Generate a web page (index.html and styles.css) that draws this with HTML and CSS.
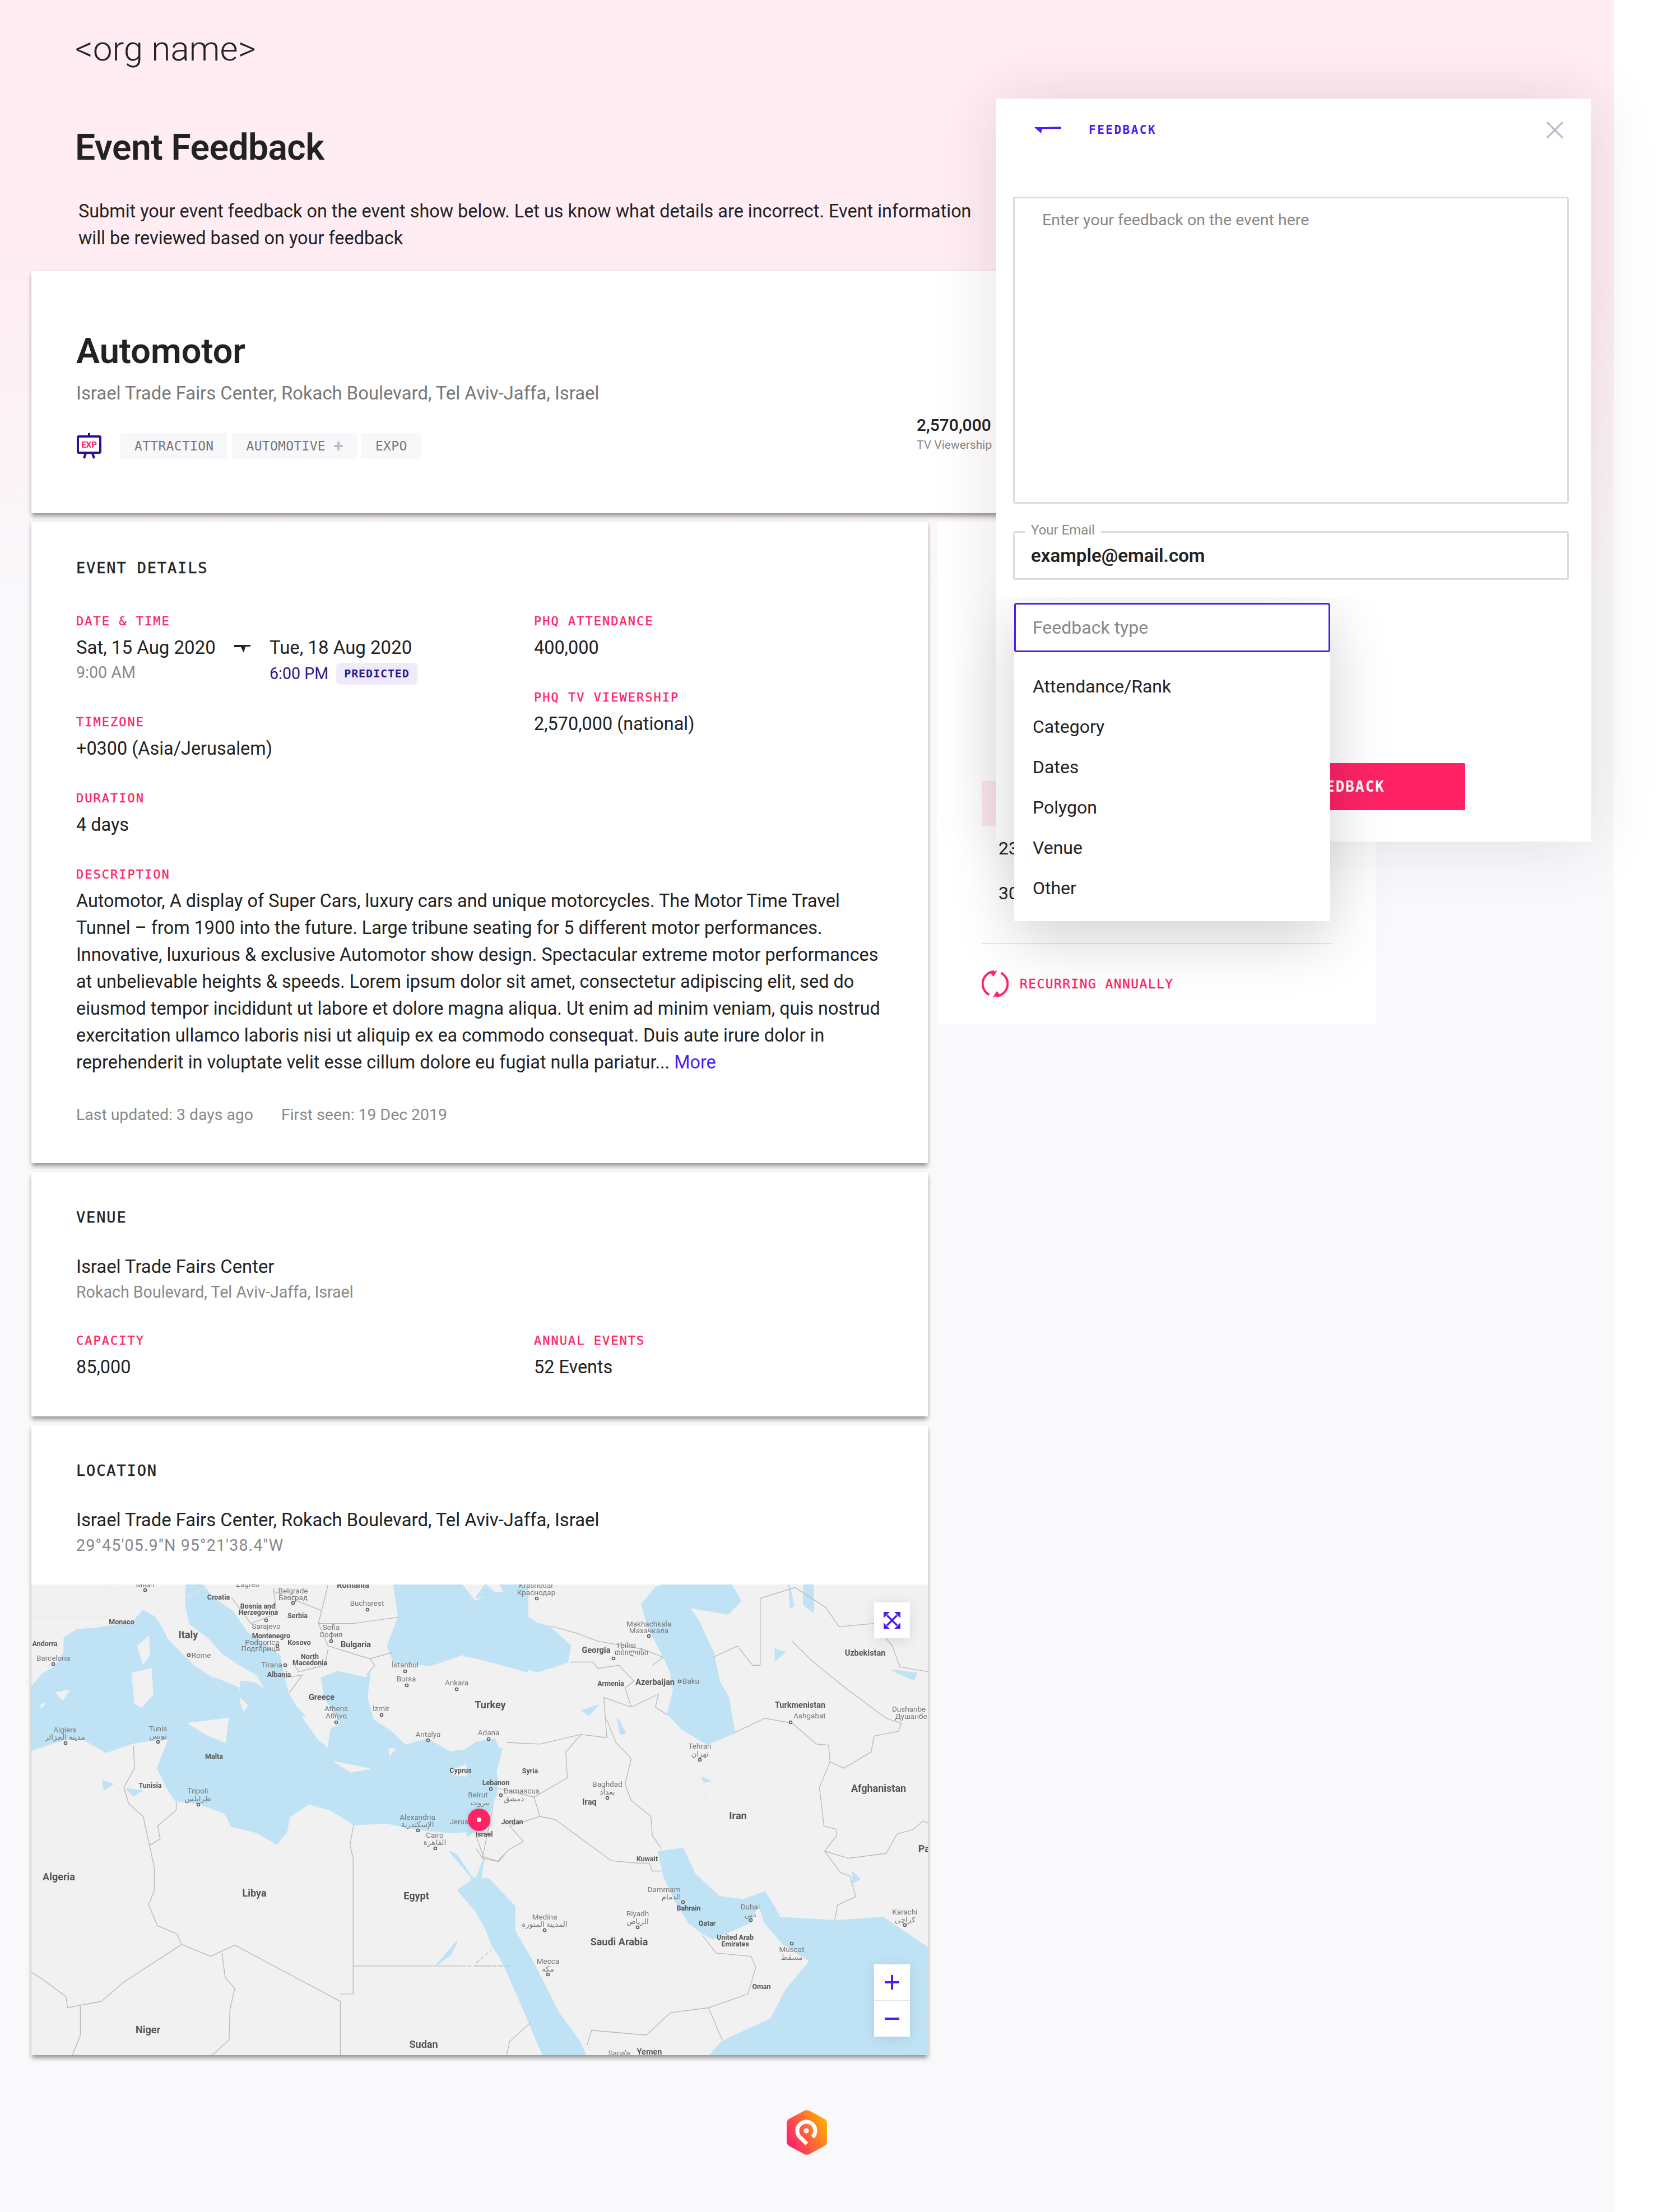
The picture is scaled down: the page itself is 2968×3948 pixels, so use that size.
FILE: index.html
```html
<!DOCTYPE html>
<html>
<head>
    <meta charset="utf-8">
    <title>Event Feedback</title>
    <link rel="stylesheet" href="styles.css">
</head>
<body>
<div class="page">
    <div class="org">&lt;org name&gt;</div>
    <h1 class="page-title">Event Feedback</h1>
    <p class="intro">Submit your event feedback on the event show below. Let us know what details are incorrect. Event information<br>will be reviewed based on your feedback</p>

    <div class="card card-top">
        <h2 class="event-name">Automotor</h2>
        <div class="event-place">Israel Trade Fairs Center, Rokach Boulevard, Tel Aviv-Jaffa, Israel</div>
        <div class="event-meta">
            <div class="tags">
                <svg class="exp-icon" width="45" height="46" viewBox="0 0 45 46">
                    <rect x="20" y="0" width="4" height="6" fill="#2e0f8f"/>
                    <rect x="2" y="6" width="40" height="29" rx="2" fill="#fff" stroke="#2e0f8f" stroke-width="4"/>
                    <path d="M16 36 L13 45 M28 36 L31 45" stroke="#2e0f8f" stroke-width="4"/>
                    <text x="22" y="26" class="exp-text" text-anchor="middle">EXP</text>
                </svg>
                <span class="tag">ATTRACTION</span>
                <span class="tag">AUTOMOTIVE <svg class="tag-plus" width="16" height="16" viewBox="0 0 16 16"><path d="M8 0V16M0 8H16" stroke="#bdbbcb" stroke-width="4"/></svg></span>
                <span class="tag">EXPO</span>
            </div>
            <div class="stat">
                <div class="stat-num">2,570,000</div>
                <div class="stat-label">TV Viewership</div>
            </div>
        </div>
    </div>

    <div class="columns">
        <div class="main-col">
            <div class="card card-details">
                <h3 class="section-title">EVENT DETAILS</h3>
                <div class="two-col">
                    <div>
                        <div class="field">
                            <div class="label">DATE &amp; TIME</div>
                            <div class="dates">
                                <div class="date-a">
                                    <div class="value">Sat, 15 Aug 2020</div>
                                    <div class="muted">9:00 AM</div>
                                </div>
                                <svg class="date-arrow" width="29" height="14" viewBox="0 0 29 14"><path d="M0 0H29V3L20 3 17 14 12 4 0 4Z" fill="#222"/></svg>
                                <div class="date-b">
                                    <div class="value">Tue, 18 Aug 2020</div>
                                    <div class="muted predicted-row"><span class="time-blue">6:00 PM</span><span class="badge">PREDICTED</span></div>
                                </div>
                            </div>
                        </div>
                        <div class="field">
                            <div class="label">TIMEZONE</div>
                            <div class="value">+0300 (Asia/Jerusalem)</div>
                        </div>
                    </div>
                    <div>
                        <div class="field">
                            <div class="label">PHQ ATTENDANCE</div>
                            <div class="value">400,000</div>
                        </div>
                        <div class="field">
                            <div class="label">PHQ TV VIEWERSHIP</div>
                            <div class="value">2,570,000 (national)</div>
                        </div>
                    </div>
                </div>
                <div class="field">
                    <div class="label">DURATION</div>
                    <div class="value">4 days</div>
                </div>
                <div class="field">
                    <div class="label">DESCRIPTION</div>
                    <p class="value description">Automotor, A display of Super Cars, luxury cars and unique motorcycles. The Motor Time Travel<br>Tunnel – from 1900 into the future. Large tribune seating for 5 different motor performances.<br>Innovative, luxurious &amp; exclusive Automotor show design. Spectacular extreme motor performances<br>at unbelievable heights &amp; speeds. Lorem ipsum dolor sit amet, consectetur adipiscing elit, sed do<br>eiusmod tempor incididunt ut labore et dolore magna aliqua. Ut enim ad minim veniam, quis nostrud<br>exercitation ullamco laboris nisi ut aliquip ex ea commodo consequat. Duis aute irure dolor in<br>reprehenderit in voluptate velit esse cillum dolore eu fugiat nulla pariatur... <a class="more">More</a></p>
                </div>
                <div class="updated"><span>Last updated: 3 days ago</span><span>First seen: 19 Dec 2019</span></div>
            </div>

            <div class="card card-venue">
                <h3 class="section-title">VENUE</h3>
                <div class="value place-name">Israel Trade Fairs Center</div>
                <div class="muted">Rokach Boulevard, Tel Aviv-Jaffa, Israel</div>
                <div class="two-col venue-stats">
                    <div>
                        <div class="label">CAPACITY</div>
                        <div class="value">85,000</div>
                    </div>
                    <div>
                        <div class="label">ANNUAL EVENTS</div>
                        <div class="value">52 Events</div>
                    </div>
                </div>
            </div>

            <div class="card card-location">
                <h3 class="section-title">LOCATION</h3>
                <div class="value place-name">Israel Trade Fairs Center, Rokach Boulevard, Tel Aviv-Jaffa, Israel</div>
                <div class="muted coords">29°45'05.9"N 95°21'38.4"W</div>
                <div class="map">
                    <svg class="map-svg" width="1600" height="840" viewBox="56 2828 1600 840">
                        <rect x="56" y="2828" width="1600" height="840" fill="#f1f1f1"/>
                        <!-- left half, coordinates read off the crop -->
                        <g transform="translate(0,2800) scale(.574)">
                            <path class="sea" d="M90,378 L130,330 170,305 200,260 200,215 240,190 300,185 345,178 410,170 445,130 480,150 500,180 520,220 560,260 600,300 650,335 680,345 740,370 745,420 755,445 725,480 750,460 775,425 745,395 750,350 790,355 830,380 800,330 740,295 690,260 650,215 590,170 578,110 580,49 630,49 660,90 720,130 770,200 830,240 870,270 880,330 895,385 920,430 960,470 1000,540 1020,560 1030,500 1060,480 1010,400 1000,340 1050,320 1140,340 1150,325 1140,400 1160,470 1220,510 1260,550 1330,530 1400,570 1480,560 1560,560 1540,640 1545,700 1500,780 1470,815 1400,820 1300,810 1200,790 1100,795 1030,750 960,730 900,770 890,820 860,855 800,820 720,800 700,760 620,730 545,720 520,680 490,620 510,570 525,530 490,530 420,540 330,570 260,530 200,530 90,565Z"/>
                            <path class="land" d="M428,240 L462,210 465,270 445,295Z M410,325 L470,310 475,390 440,430 420,420Z M585,480 L710,465 700,540 640,515Z M175,385 L215,378 195,408Z M125,425 L140,418 130,432Z M940,460 L1000,465 1020,555 990,530Z M1040,600 L1150,622 1090,632Z M1210,560 L1228,560 1212,580Z M1405,625 L1490,595 1450,645 1410,640Z"/>
                            <path class="sea" d="M1225,49 L1240,150 1205,240 1225,290 1340,300 1440,265 1640,320 1640,49Z M1400,880 L1425,910 1480,975 1460,950 1420,890Z M1505,900 L1480,970 1495,960Z M1465,965 L1520,965 1600,1050 1600,1270 1530,1170 1500,1090Z"/>
                            <path class="land" d="M1440,49 L1550,49 1568,80 1500,130 1480,100Z"/>
                            <path class="sea" d="M320,660 L350,670 325,685Z M395,685 L440,690 415,705Z M1360,1230 L1420,1160 1400,1200Z"/>
                            <path class="border" d="M415,550 L418,620 385,680 400,730 445,770 465,860 480,930 480,1000 462,1045 490,1110 550,1135 565,1168 385,1285 315,1345 210,1365 205,1330 130,1275 98,1255 M548,725 L548,750 490,800 498,840 465,860 M565,1168 L655,1205 730,1170 1058,1345 1058,1512 M250,1360 L250,1450 225,1512 M690,1195 L700,1270 730,1305 715,1370 712,1465 660,1512 M1058,1322 L1098,1322 1098,900 1088,860 1100,795 M1098,1235 L1435,1235 M1480,830 L1503,895 1550,910 1568,890 M720,90 L780,170 860,140 850,60 M850,70 L1000,130 990,170 1100,170 1240,150 M1000,130 L1020,50 M990,170 L1020,240 1150,280 1220,260 M915,300 L930,320 1010,300 1020,250 M880,340 L940,330 900,385 M1150,280 L1165,300 1140,330"/>
                            <path class="border border-dash" d="M1435,1235 L1568,1235"/>
                            <path class="road" d="M200,130 L360,60 M100,150 L340,150 M520,110 L640,60 M700,380 L640,320 M1300,400 L1500,470"/>
                        </g>
                        <!-- right half, coordinates read off the crop -->
                        <g transform="translate(850,2800) scale(.542,.574)">
                            <path class="sea" d="M-40,110 L0,100 60,75 140,75 100,105 200,170 240,180 310,240 300,290 200,320 100,290 -40,270Z M30,49 L60,75 0,90Z"/>
                            <path class="sea" d="M545,110 L590,60 620,49 840,49 870,100 830,140 700,120 730,160 780,260 800,350 830,400 850,510 760,545 680,500 630,450 650,380 640,320 610,260 570,190Z"/>
                            <path class="land" d="M800,260 L860,260 880,320 830,335Z"/>
                            <path class="sea" d="M0,540 L60,530 75,560 60,610 70,660 55,730 25,800 -30,830 -30,560Z"/>
                            <path class="sea" d="M-30,980 L0,960 60,1020 110,1100 190,1230 270,1380 340,1470 360,1512 220,1512 170,1400 110,1270 50,1150 0,1065 -60,1000Z M600,880 L680,870 720,950 800,1020 880,1030 950,1005 980,1050 1000,1085 1180,1095 1340,1085 1488,1180 1488,1512 770,1512 810,1470 970,1400 1020,1310 1100,1220 1010,1165 950,1100 930,1040 900,1100 780,1150 740,1130 700,1100 660,1040 620,960Z"/>
                            <path class="sea" d="M1030,49 L1045,115 1035,120Z M1080,49 L1108,49 1110,135 1078,110Z M1240,945 L1262,965 1240,975Z M350,440 L400,425 370,455Z M465,465 L490,510 475,515Z M745,650 L770,660 750,662Z M985,250 L1015,260 985,285Z M1370,315 L1450,325 1440,345Z"/>
                            <path class="border" d="M20,900 L70,910 105,875 155,848 110,800 210,770 190,710 300,650 295,570 345,515 430,525 420,400 510,430 600,390 590,430 630,455 M210,770 L260,780 445,908 530,915 570,915 580,940 610,940 M430,470 L460,540 510,590 490,670 510,720 575,770 580,830 610,870 M850,510 L950,465 1040,480 1120,545 1160,548 1165,600 1130,680 1145,800 1187,810 1187,830 1147,878 1200,945 1230,955 1250,1020 1190,1045 1180,1095 M1147,878 L1225,900 1350,885 1385,825 1440,810 1470,785 1488,790 M935,300 L935,92 1050,58 1150,120 1195,180 1310,170 M935,300 L910,300 860,240 780,275 M1040,225 L1110,290 1215,370 1350,465 1400,480 1390,505 1310,520 1300,570 1210,620 1165,600 M905,1205 L920,1240 895,1322 765,1365 640,1380 560,1450 380,1435 365,1480 M765,1365 L810,1465 M745,1140 L790,1195 905,1205 M245,178 L330,200 400,225 490,240 550,250 615,275 580,300 M310,290 L385,290 400,310 470,300 520,350 490,370 510,430 M100,540 L210,545 345,515 M60,680 L190,710 M55,740 L20,900 0,870 M1370,240 L1395,305 1488,320 M1310,170 L1370,240 M180,1410 L110,1470 100,1512"/>
                            <path class="border border-dash" d="M0,1235 L110,1235 M0,1225 L50,1185"/>
                            <path class="road" d="M620,630 L735,595 M730,620 L760,720 M520,480 L620,520"/>
                        </g>
                        <g class="dots">
                            <circle cx="259" cy="2838" r="2.5"/><circle cx="523" cy="2861" r="2.5"/><circle cx="656" cy="2873" r="2.5"/><circle cx="475" cy="2892" r="2.5"/><circle cx="591" cy="2929" r="2.5"/><circle cx="337" cy="2954" r="2.5"/><circle cx="495" cy="2938" r="2.5"/><circle cx="509" cy="2972" r="2.5"/><circle cx="723" cy="2983" r="2.5"/><circle cx="726" cy="3008" r="2.5"/><circle cx="815" cy="3015" r="2.5"/><circle cx="600" cy="3074" r="2.5"/><circle cx="681" cy="3061" r="2.5"/><circle cx="117" cy="3111" r="2.5"/><circle cx="282" cy="3109" r="2.5"/><circle cx="354" cy="3221" r="2.5"/><circle cx="746" cy="3267" r="2.5"/><circle cx="777" cy="3299" r="2.5"/><circle cx="764" cy="3106" r="2.5"/><circle cx="872" cy="3104" r="2.5"/><circle cx="95" cy="2970" r="2.5"/><circle cx="876" cy="3193" r="2.5"/><circle cx="958" cy="2853" r="2.5"/><circle cx="1158" cy="2920" r="2.5"/><circle cx="1095" cy="2960" r="2.5"/><circle cx="1213" cy="3001" r="2.5"/><circle cx="1411" cy="3074" r="2.5"/><circle cx="1249" cy="3141" r="2.5"/><circle cx="894" cy="3204" r="2.5"/><circle cx="1084" cy="3209" r="2.5"/><circle cx="1219" cy="3395" r="2.5"/><circle cx="1340" cy="3427" r="2.5"/><circle cx="1138" cy="3440" r="2.5"/><circle cx="972" cy="3445" r="2.5"/><circle cx="1413" cy="3469" r="2.5"/><circle cx="978" cy="3524" r="2.5"/><circle cx="1615" cy="3436" r="2.5"/>
                        </g>
                        <g class="city">
                            <text x="259" y="2833">Milan</text><text x="442" y="2832">Zagreb</text>
                            <text x="523" y="2844">Belgrade</text><text x="523" y="2856">Београд</text>
                            <text x="655" y="2866">Bucharest</text><text x="475" y="2907">Sarajevo</text>
                            <text x="591" y="2909">Sofia</text><text x="591" y="2922">София</text>
                            <text x="468" y="2936">Podgorica</text><text x="465" y="2947">Подгорица</text>
                            <text x="95" y="2964">Barcelona</text><text x="359" y="2959">Rome</text><text x="485" y="2976">Tirana</text>
                            <text x="723" y="2976">İstanbul</text><text x="725" y="3001">Bursa</text><text x="815" y="3008">Ankara</text>
                            <text x="600" y="3054">Athens</text><text x="600" y="3067">Αθήνα</text><text x="680" y="3054">İzmir</text>
                            <text x="116" y="3092">Algiers</text><text x="116" y="3105">مدينة الجزائر</text>
                            <text x="282" y="3090">Tunis</text><text x="282" y="3103">تونس</text>
                            <text x="764" y="3100">Antalya</text><text x="872" y="3097">Adana</text>
                            <text x="353" y="3201">Tripoli</text><text x="353" y="3215">طرابلس</text>
                            <text x="853" y="3208">Beirut</text><text x="857" y="3222">بيروت</text>
                            <text x="745" y="3248">Alexandria</text><text x="745" y="3261">الإسكندرية</text>
                            <text x="834" y="3256">Jerusalem</text>
                            <text x="776" y="3280">Cairo</text><text x="776" y="3293">القاهرة</text>
                            <text x="957" y="2834">Krasnodar</text><text x="957" y="2847">Краснодар</text>
                            <text x="1158" y="2903">Makhachkala</text><text x="1158" y="2915">Махачкала</text>
                            <text x="1117" y="2941">Tbilisi</text><text x="1127" y="2954">თბილისი</text>
                            <text x="1233" y="3005">Baku</text><text x="1445" y="3067">Ashgabat</text>
                            <text x="1622" y="3055">Dushanbe</text><text x="1626" y="3068">Душанбе</text>
                            <text x="1249" y="3121">Tehran</text><text x="1249" y="3135">تهران</text>
                            <text x="1084" y="3189">Baghdad</text><text x="1084" y="3203">بغداد</text>
                            <text x="931" y="3201">Damascus</text><text x="917" y="3215">دمشق</text>
                            <text x="1185" y="3377">Dammam</text><text x="1198" y="3390">الدمام</text>
                            <text x="1339" y="3408">Dubai</text><text x="1339" y="3422">دبي</text>
                            <text x="1615" y="3417">Karachi</text><text x="1615" y="3431">كراچی</text>
                            <text x="1138" y="3420">Riyadh</text><text x="1138" y="3434">الرياض</text>
                            <text x="972" y="3426">Medina</text><text x="972" y="3439">المدينة المنورة</text>
                            <text x="1413" y="3484">Muscat</text><text x="1413" y="3498">مسقط</text>
                            <text x="978" y="3505">Mecca</text><text x="978" y="3519">مكة</text>
                            <text x="1105" y="3669">Sana'a</text>
                        </g>
                        <g class="small-country">
                            <text x="390" y="2855">Croatia</text><text x="460" y="2871">Bosnia and</text><text x="461" y="2882">Herzegovina</text>
                            <text x="531" y="2888">Serbia</text><text x="217" y="2899">Monaco</text><text x="484" y="2924">Montenegro</text>
                            <text x="80" y="2938">Andorra</text><text x="534" y="2936">Kosovo</text><text x="553" y="2961">North</text><text x="553" y="2972">Macedonia</text>
                            <text x="498" y="2993">Albania</text><text x="382" y="3139">Malta</text><text x="822" y="3164">Cyprus</text>
                            <text x="268" y="3191">Tunisia</text><text x="885" y="3186">Lebanon</text><text x="864" y="3278">Israel</text>
                            <text x="1090" y="3009">Armenia</text><text x="946" y="3165">Syria</text><text x="914" y="3256">Jordan</text>
                            <text x="1155" y="3322">Kuwait</text><text x="1229" y="3410">Bahrain</text><text x="1262" y="3437">Qatar</text>
                            <text x="1312" y="3462">United Arab</text><text x="1312" y="3474">Emirates</text><text x="1359" y="3550">Oman</text>
                        </g>
                        <g class="mid-country">
                            <text x="630" y="2834">Romania</text><text x="635" y="2940">Bulgaria</text><text x="574" y="3034">Greece</text>
                            <text x="1064" y="2950">Georgia</text><text x="1169" y="3007">Azerbaijan</text><text x="1544" y="2955">Uzbekistan</text>
                            <text x="1428" y="3048">Turkmenistan</text><text x="1052" y="3221">Iraq</text><text x="1159" y="3667">Yemen</text>
                        </g>
                        <g class="country">
                            <text x="336" y="2924">Italy</text><text x="875" y="3049">Turkey</text><text x="105" y="3356">Algeria</text>
                            <text x="454" y="3385">Libya</text><text x="743" y="3390">Egypt</text><text x="264" y="3629">Niger</text>
                            <text x="756" y="3655">Sudan</text><text x="1568" y="3198">Afghanistan</text><text x="1317" y="3247">Iran</text>
                            <text x="1105" y="3472">Saudi Arabia</text><text x="1674" y="3306">Pakistan</text>
                        </g>
                        <circle class="pin" cx="855" cy="3248" r="20"/>
                        <circle cx="855" cy="3248" r="4" fill="#fff"/>
                    </svg>
                    <div class="map-btn map-expand">
                        <svg width="30" height="30" viewBox="0 0 30 30">
                            <path d="M6 6L24 24M24 6L6 24" stroke="#4f1cf0" stroke-width="3.5"/>
                            <path d="M0 0H11L0 11ZM30 0V11L19 0ZM0 30V19L11 30ZM30 30H19L30 19Z" fill="#4f1cf0"/>
                        </svg>
                    </div>
                    <div class="map-zoom">
                        <div class="map-btn-half">
                            <svg width="30" height="30" viewBox="0 0 30 30"><path d="M15 2V28M2 15H28" stroke="#4f1cf0" stroke-width="4"/></svg>
                        </div>
                        <div class="map-btn-half">
                            <svg width="30" height="30" viewBox="0 0 30 30"><path d="M2 15H28" stroke="#4f1cf0" stroke-width="4"/></svg>
                        </div>
                    </div>
                </div>
            </div>
        </div>

        <div class="side-card">
            <div class="side-pink"></div>
            <div class="side-date">23</div>
            <div class="side-date side-date-2">30</div>
            <div class="side-line"></div>
            <div class="recurring">
                <svg width="48" height="48" viewBox="0 0 48 48">
                    <path d="M13.5 43.5A22 22 0 0 1 22 2" fill="none" stroke="#ff2366" stroke-width="4"/>
                    <path d="M34.5 4.5A22 22 0 0 1 26 46" fill="none" stroke="#ff2366" stroke-width="4"/>
                    <path d="M28 0L21 11 15 4ZM20 48L27 37 33 44Z" fill="#ff2366"/>
                </svg>
                <span>RECURRING ANNUALLY</span>
            </div>
        </div>
    </div>

    <svg class="logo" width="72" height="80" viewBox="0 0 72 80">
        <defs>
            <linearGradient id="logo-grad" x1="0" y1="0.8" x2="1" y2="0.25">
                <stop offset="0.05" stop-color="#ff1f6e"/>
                <stop offset="1" stop-color="#ffb000"/>
            </linearGradient>
        </defs>
        <path d="M31 1.5Q36 -1 41 1.5L67 15.5Q72 18 72 24V56Q72 62 67 64.5L41 78.5Q36 81 31 78.5L5 64.5Q0 62 0 56V24Q0 18 5 15.5Z" fill="url(#logo-grad)"/>
        <path d="M36 60.5L23.7 48.3A16 16 0 1 1 46.3 48.3" fill="none" stroke="#fff" stroke-width="7"/>
        <circle cx="35" cy="37" r="4.5" fill="#fff"/>
    </svg>

    <!-- feedback panel lies over the event page -->
    <div class="modal">
        <div class="modal-top">
            <div class="modal-head">
                <svg width="48" height="12" viewBox="0 0 48 12"><path d="M48 0V4H14L12 12 0 1H14Z" fill="#4f1cf0"/></svg>
                <span class="modal-title">FEEDBACK</span>
                <svg class="modal-close" width="32" height="32" viewBox="0 0 32 32"><path d="M1 1L31 31M31 1L1 31" stroke="#bcb9cc" stroke-width="3.5"/></svg>
            </div>
            <div class="textarea">Enter your feedback on the event here</div>
            <div class="email-box">
                <span class="email-label">Your Email</span>
                <span class="email-value">example@email.com</span>
            </div>
        </div>
        <div class="modal-bottom">
            <div class="submit">SUBMIT FEEDBACK</div>
        </div>
        <div class="select">
            <div class="select-input">Feedback type</div>
            <ul class="select-list">
                <li>Attendance/Rank</li>
                <li>Category</li>
                <li>Dates</li>
                <li>Polygon</li>
                <li>Venue</li>
                <li>Other</li>
            </ul>
        </div>
    </div>
</div>
</body>
</html>
```

FILE: styles.css
```css
body {
    margin: 0;
    background-color: #fff;
    font-family: "Roboto", sans-serif;
    color: #222;
}

h1, h2, h3, p, ul {
    margin: 0;
    padding: 0;
}

.page {
    position: relative;
    width: 2880px;
    height: 3948px;
    background: linear-gradient(#ffedf3 0px, #ffedf3 480px, #f9f9fb 1100px);
}

.org {
    padding: 47px 0 0 134px;
    font-size: 62px;
    line-height: 80px;
    font-weight: 300;
}

.page-title {
    margin: 97px 0 0 134px;
    font-size: 64px;
    line-height: 80px;
    font-weight: 600;
    letter-spacing: -0.5px;
}

.intro {
    margin: 49px 0 0 140px;
    font-size: 32.4px;
    line-height: 48px;
    white-space: nowrap;
}

.card {
    background: #fff;
    padding: 63px 80px 64px 80px;
    box-shadow: 0 6px 8px -1px rgba(0,0,0,0.4), 0 0 6px rgba(0,0,0,0.06);
}

.card-details {
    padding-top: 65px;
    padding-bottom: 66px;
}

.card-top {
    margin: 35px 0 0 56px;
    width: 2400px;
    height: 432px;
    box-sizing: border-box;
    padding: 103px 0 0 80px;
}

.event-name {
    font-size: 63px;
    line-height: 80px;
    font-weight: 600;
}

.event-place {
    margin-top: 11px;
    font-size: 32.8px;
    line-height: 48px;
    color: #777;
}

.event-meta {
    margin-top: 15px;
    height: 78px;
    display: grid;
    grid-template-columns: 1500px auto;
}

.tags {
    display: flex;
    align-items: center;
    gap: 8px;
    align-self: end;
}

.exp-icon {
    margin: 0 25px 0 1px;
}

.exp-text {
    font-family: "Roboto", sans-serif;
    font-weight: 700;
    font-size: 15px;
    fill: #ff2366;
}

.tag {
    display: flex;
    align-items: center;
    gap: 15px;
    height: 46px;
    padding: 0 25px;
    background: #f8f8fb;
    border-radius: 3px;
    font-family: "DejaVu Sans Mono", monospace;
    font-size: 23px;
    letter-spacing: 0.3px;
    color: #777;
}

.stat-num {
    font-size: 30px;
    line-height: 36px;
    font-weight: 500;
}

.stat-label {
    font-size: 21px;
    line-height: 34px;
    color: #888;
}

.columns {
    display: grid;
    grid-template-columns: 1600px 784px;
    gap: 16px;
    margin: 15px 0 0 56px;
    align-items: start;
}

.main-col {
    display: flex;
    flex-direction: column;
    gap: 16px;
}

.section-title {
    font-family: "DejaVu Sans Mono", monospace;
    font-size: 27px;
    line-height: 36px;
    font-weight: 400;
    letter-spacing: 1.85px;
    -webkit-text-stroke: 0.5px #222;
    margin-bottom: 64px;
}

.card-details .section-title {
    margin-bottom: 62px;
}

.two-col {
    display: grid;
    grid-template-columns: 817px 1fr;
}

.field {
    margin-bottom: 50px;
}

.label {
    font-family: "DejaVu Sans Mono", monospace;
    font-size: 22px;
    line-height: 30px;
    letter-spacing: 2px;
    -webkit-text-stroke: 0.4px #ff2366;
    color: #ff2366;
    margin-bottom: 8px;
}

.value {
    font-size: 32.4px;
    line-height: 48px;
    white-space: nowrap;
}

.muted {
    font-size: 28.6px;
    line-height: 40px;
    color: #888;
}

.coords {
    letter-spacing: 1.1px;
}

.dates {
    display: flex;
    align-items: flex-start;
}

.date-a {
    width: 282px;
}

.date-b {
    margin-left: 34px;
}

.dates .value {
    font-size: 33px;
}

.date-arrow {
    margin-top: 19px;
}

.predicted-row {
    display: flex;
    align-items: center;
    height: 44px;
}

.time-blue {
    color: #2c1a8c;
}

.badge {
    margin-left: 14px;
    padding: 0 14px;
    height: 39px;
    display: flex;
    align-items: center;
    background: #efebfd;
    border-radius: 8px;
    font-family: "DejaVu Sans Mono", monospace;
    font-weight: 700;
    font-size: 20px;
    letter-spacing: 0.9px;
    color: #2c1a8c;
}

.description {
    margin: 0;
}

.more {
    color: #4f1cf0;
}

.updated {
    display: flex;
    gap: 50px;
    font-size: 28.4px;
    line-height: 40px;
    color: #888;
}

.place-name {
    margin-bottom: 1px;
    font-size: 32.8px;
}

.section-title + .place-name {
    margin-top: -18px;
}

.venue-stats {
    margin-top: 52px;
}

.card-location {
    padding-bottom: 0;
}

.map {
    position: relative;
    margin: 50px -80px 0 -80px;
    height: 840px;
}

.map-svg {
    display: block;
    filter: blur(0.5px);
}

.sea {
    fill: #bfe3f5;
    stroke: #bfe3f5;
    stroke-width: 5;
    stroke-linejoin: round;
}

.land {
    fill: #f1f1f1;
    stroke: #f1f1f1;
    stroke-width: 3;
    stroke-linejoin: round;
}

.border {
    fill: none;
    stroke: #b9b9b9;
    stroke-width: 2.4;
}

.border-dash {
    stroke-dasharray: 12 7;
}

.road {
    fill: none;
    stroke: #e9e9e9;
    stroke-width: 2;
}

.dots circle {
    fill: #f1f1f1;
    stroke: #555;
    stroke-width: 1.6;
}

.map-svg text {
    font-family: "Roboto", "DejaVu Sans", sans-serif;
    text-anchor: middle;
}

.city text {
    font-size: 13.5px;
    fill: #777;
}

.small-country text {
    font-size: 12.5px;
    font-weight: 700;
    fill: #555;
}

.mid-country text {
    font-size: 14.5px;
    font-weight: 700;
    fill: #555;
}

.country text {
    font-size: 18px;
    font-weight: 700;
    fill: #555;
}

.pin {
    fill: #ff2366;
    filter: drop-shadow(0 1px 4px rgba(0,0,0,0.2));
}

.map-btn,
.map-zoom {
    position: absolute;
    left: 1504px;
    width: 64px;
    background: #fff;
    box-shadow: 0 4px 24px rgba(0,0,0,0.1);
}

.map-btn {
    top: 32px;
    height: 64px;
    display: flex;
    align-items: center;
    justify-content: center;
}

.map-zoom {
    top: 678px;
    height: 129px;
}

.map-btn-half {
    height: 64px;
    display: flex;
    align-items: center;
    justify-content: center;
}

.map-btn-half + .map-btn-half {
    border-top: 1px solid #e8e8e8;
}

.side-card {
    background: #fff;
    padding: 463px 78px 48px 80px;
}

.side-pink {
    height: 80px;
    background: #ffeaf0;
}

.side-date {
    margin-top: 16px;
    padding-left: 30px;
    font-size: 32px;
    line-height: 48px;
}

.side-date-2 {
    margin-top: 32px;
}

.side-line {
    margin-top: 65px;
    height: 2px;
    background: #e8e8e8;
}

.recurring {
    margin-top: 47px;
    display: flex;
    align-items: center;
    gap: 20px;
    font-family: "DejaVu Sans Mono", monospace;
    font-size: 23px;
    letter-spacing: 1.4px;
    -webkit-text-stroke: 0.4px #ff2366;
    color: #ff2366;
}

.recurring svg {
    display: block;
}

.logo {
    position: absolute;
    left: 1404px;
    top: 3766px;
}

.modal {
    position: absolute;
    left: 1778px;
    top: 176px;
    width: 1062px;
    z-index: 3;
    box-shadow: 0 0 110px rgba(60,20,50,0.13);
}

.modal-top {
    position: relative;
    z-index: 2;
    height: 890px;
    box-sizing: border-box;
    padding: 0 40px 0 30px;
    background: #fff;
}

.modal-head {
    display: flex;
    align-items: center;
    height: 112px;
    padding-left: 38px;
    position: relative;
}

.modal-title {
    margin-left: 49px;
    font-family: "DejaVu Sans Mono", monospace;
    font-weight: 700;
    font-size: 21px;
    letter-spacing: 2.5px;
    color: #4f1cf0;
}

.modal-close {
    margin-left: auto;
    margin-right: 10px;
    width: 30px;
    height: 30px;
}

.textarea {
    margin-top: 63px;
    box-sizing: border-box;
    height: 548px;
    border: 3px solid #dcdcdc;
    border-radius: 4px;
    padding: 19px 49px;
    font-size: 28.5px;
    line-height: 40px;
    color: #888;
}

.email-box {
    position: relative;
    margin-top: 49px;
    box-sizing: border-box;
    height: 87px;
    border: 3px solid #dcdcdc;
    border-radius: 4px;
    padding: 0 29px;
    display: flex;
    align-items: center;
}

.email-label {
    position: absolute;
    left: 18px;
    top: -20px;
    padding: 0 11px;
    background: #fff;
    font-size: 24px;
    line-height: 30px;
    color: #888;
}

.email-value {
    font-size: 33px;
    font-weight: 600;
}

.modal-bottom {
    height: 436px;
    box-sizing: border-box;
    padding: 296px 0 0 284px;
    background: #fff;
}

.submit {
    width: 553px;
    height: 84px;
    box-sizing: border-box;
    padding-right: 143px;
    display: flex;
    align-items: center;
    justify-content: flex-end;
    background: #ff2366;
    border-radius: 2px;
    font-family: "DejaVu Sans Mono", monospace;
    font-weight: 700;
    font-size: 26px;
    letter-spacing: 2px;
    color: #fff;
}

.select {
    position: absolute;
    left: 32px;
    top: 900px;
    width: 564px;
    z-index: 1;
    box-shadow: 0 30px 100px rgba(0,0,0,0.18);
}

.select-input {
    box-sizing: border-box;
    height: 88px;
    border: 3px solid #4f1cf0;
    border-radius: 4px;
    padding: 0 30px;
    display: flex;
    align-items: center;
    background: #fff;
    font-size: 32px;
    color: #888;
}

.select-list {
    list-style: none;
    background: #fff;
    padding: 25px 0 23px 33px;
    font-size: 32px;
}

.select-list li {
    height: 72px;
    line-height: 72px;
}
```
